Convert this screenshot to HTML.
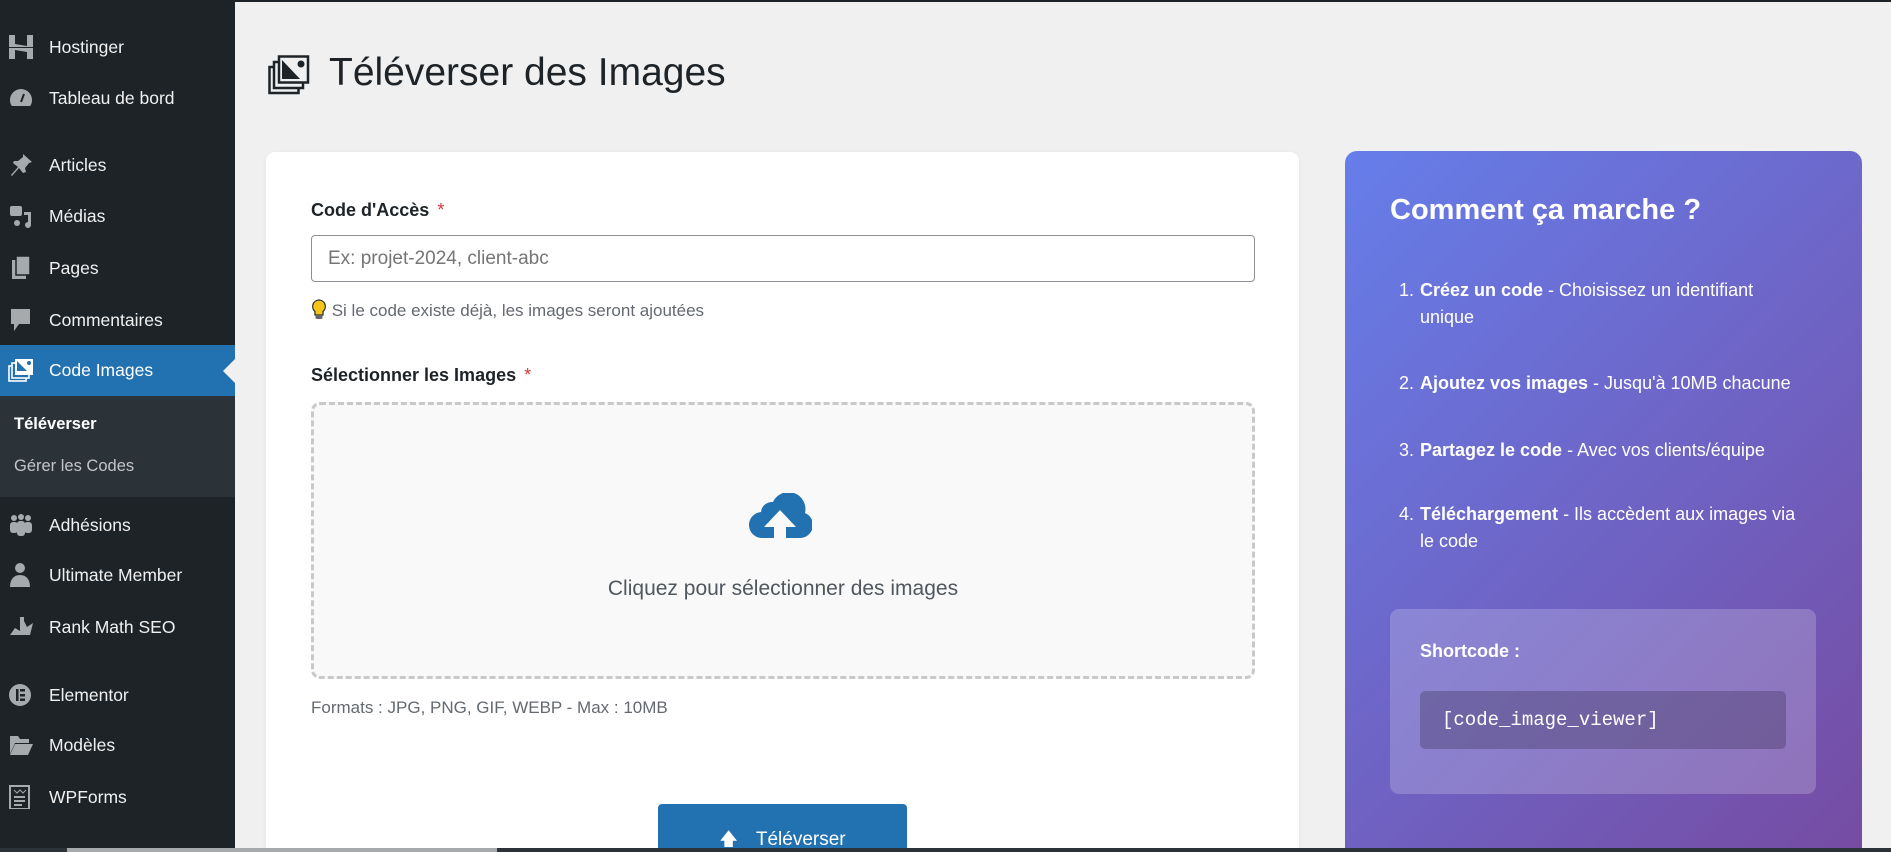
<!DOCTYPE html>
<html style="overflow:hidden;height:852px"><head><meta charset="utf-8">
<style>
*{margin:0;padding:0;box-sizing:border-box}
body{width:1891px;height:852px;overflow:hidden;background:#f0f0f1;font-family:"Liberation Sans",sans-serif;position:relative}
.sb{position:absolute;left:0;top:0;width:235px;height:852px;background:#1d2327}
.it{position:absolute;left:0;width:235px;height:42px;color:#f0f0f1;font-size:17.5px;line-height:42px;padding-left:49px}
.ic{position:absolute;left:8px;top:9px;width:26px;height:24px}
.hl{background:#2271b1;color:#fff}
.sub{position:absolute;left:0;top:396px;width:235px;height:101px;background:#2c3338}
.sub div{position:absolute;left:14px;font-size:16.5px}
.arrow{position:absolute;right:0;top:359px;width:0;height:0;border-top:12px solid transparent;border-bottom:12px solid transparent;border-right:12px solid #f0f0f1}
.card{position:absolute;left:266px;top:152px;width:1033px;height:710px;background:#fff;border-radius:9px;box-shadow:0 1px 4px rgba(0,0,0,.06)}
.lbl{position:absolute;left:311px;font-size:18px;font-weight:bold;color:#1d2327}
.lbl span{color:#d63638;font-weight:normal;margin-left:8px}
.inp{position:absolute;left:311px;top:235px;width:944px;height:47px;border:1px solid #8c8f94;border-radius:4px;font-size:19px;color:#757575;padding-left:16px;line-height:45px}
.drop{position:absolute;left:311px;top:402px;width:944px;height:277px;border:3px dashed #c9c9c9;border-radius:9px;background:#f9f9f9}
.panel{position:absolute;left:1345px;top:151px;width:517px;height:711px;border-radius:12px;background:linear-gradient(135deg,#667eea 0%,#764ba2 100%);color:#fff;overflow:hidden}
.li{position:absolute;left:54px;font-size:18px;line-height:27px;width:403px}
.li .n{position:absolute;left:0}
.li .t{padding-left:21px}
</style></head><body>
<div style="position:absolute;left:0;top:0;width:1891px;height:2px;background:#1d2327"></div>
<div class="sb">
 <div class="it" style="top:26px"><svg class="ic" viewBox="0 0 26 24"><path d="M1 0h6v9l12 2V0h6v12H1zM1 13h24v11h-6v-7L7 15v9H1z" fill="#a7aaad"/></svg>Hostinger</div>
 <div class="it" style="top:77px"><svg class="ic" viewBox="0 0 26 24"><path d="M13 3a11 11 0 0 0-11 11c0 3 1 5 2 6h18c1-1 2-3 2-6A11 11 0 0 0 13 3z" fill="#a7aaad"/><path d="M13 16l3-8" stroke="#1d2327" stroke-width="2"/></svg>Tableau de bord</div>
 <div class="it" style="top:144px"><svg class="ic" viewBox="0 0 26 24"><path d="M15 1l9 8-3 1-4 5 1 4-3 1-4-5-7 8-1-1 7-8-5-4 1-2 4 0 5-4z" fill="#a7aaad"/></svg>Articles</div>
 <div class="it" style="top:195px"><svg class="ic" viewBox="0 0 26 24"><rect x="2" y="2" width="12" height="10" rx="2" fill="#a7aaad"/><circle cx="9" cy="19" r="3" fill="#a7aaad"/><path d="M16 8h7v13a3 3 0 1 1-3-3V11h-4z" fill="#a7aaad"/></svg>Médias</div>
 <div class="it" style="top:247px"><svg class="ic" viewBox="0 0 26 24"><rect x="4" y="4" width="14" height="19" fill="#a7aaad"/><rect x="8" y="0" width="14" height="19" fill="#a7aaad" stroke="#1d2327" stroke-width="1.5"/></svg>Pages</div>
 <div class="it" style="top:299px"><svg class="ic" viewBox="0 0 26 24"><path d="M3 1h19v15H11l-5 7v-7H3z" fill="#a7aaad"/></svg>Commentaires</div>
 <div class="it hl" style="top:345px;height:51px;line-height:51px"><svg class="ic" style="top:13px" viewBox="0 0 26 24"><rect x="1" y="8" width="17" height="15" fill="none" stroke="#fff" stroke-width="1.6"/><rect x="4" y="5" width="17" height="15" fill="#2271b1" stroke="#fff" stroke-width="1.6"/><rect x="7" y="1" width="18" height="16" fill="#fff"/><path d="M9 3l10 10H9z" fill="#2271b1"/><circle cx="21" cy="5" r="2" fill="#2271b1"/></svg>Code Images</div>
 <div class="sub"><div style="top:19px;color:#fff;font-weight:bold">Téléverser</div><div style="top:61px;color:#c3c4c7">Gérer les Codes</div></div>
 <div class="arrow"></div>
 <div class="it" style="top:504px"><svg class="ic" viewBox="0 0 26 24"><circle cx="6" cy="5" r="3" fill="#a7aaad"/><circle cx="13" cy="4" r="3" fill="#a7aaad"/><circle cx="20" cy="5" r="3" fill="#a7aaad"/><rect x="2" y="9" width="8" height="11" rx="3" fill="#a7aaad"/><rect x="16" y="9" width="8" height="11" rx="3" fill="#a7aaad"/><rect x="9" y="8" width="8" height="15" rx="3" fill="#a7aaad"/></svg>Adhésions</div>
 <div class="it" style="top:554px"><svg class="ic" viewBox="0 0 26 24"><circle cx="12" cy="5" r="5" fill="#a7aaad"/><path d="M2 24c0-8 4-12 10-12s10 4 10 12z" fill="#a7aaad"/></svg>Ultimate Member</div>
 <div class="it" style="top:606px"><svg class="ic" viewBox="0 0 26 24"><path d="M2 20l5-7 5 3 4-10 3 6 6-4-3 12z" fill="#a7aaad"/><rect x="12" y="2" width="4" height="16" fill="#a7aaad"/></svg>Rank Math SEO</div>
 <div class="it" style="top:674px"><svg class="ic" viewBox="0 0 26 24"><circle cx="12" cy="12" r="11" fill="#a7aaad"/><rect x="8" y="6" width="2.5" height="12" fill="#1d2327"/><rect x="12" y="6" width="5" height="2.5" fill="#1d2327"/><rect x="12" y="11" width="5" height="2.5" fill="#1d2327"/><rect x="12" y="15.5" width="5" height="2.5" fill="#1d2327"/></svg>Elementor</div>
 <div class="it" style="top:724px"><svg class="ic" viewBox="0 0 26 24"><path d="M2 3h8l2 3h9v4H7l-5 11z" fill="#a7aaad"/><path d="M7 11h18l-5 11H2z" fill="#a7aaad"/></svg>Modèles</div>
 <div class="it" style="top:776px"><svg class="ic" viewBox="0 0 26 24"><rect x="2" y="1" width="19" height="23" fill="none" stroke="#a7aaad" stroke-width="2"/><path d="M6 5l3 3 3-3 3 3 3-3" stroke="#a7aaad" fill="none"/><rect x="6" y="11" width="11" height="2" fill="#a7aaad"/><rect x="6" y="15" width="11" height="2" fill="#a7aaad"/><rect x="6" y="19" width="8" height="2" fill="#a7aaad"/></svg>WPForms</div>
</div>

<svg style="position:absolute;left:268px;top:55px" width="42" height="40" viewBox="0 0 42 40"><rect x="1.5" y="12" width="29" height="26" fill="none" stroke="#1d2327" stroke-width="2.5"/><rect x="6" y="7" width="29" height="26" fill="#f0f0f1" stroke="#1d2327" stroke-width="2.5"/><rect x="11" y="1.5" width="29" height="26" fill="#f0f0f1" stroke="#1d2327" stroke-width="2.5"/><path d="M14 5l18 19H14z" fill="#1d2327"/><circle cx="33" cy="9" r="3.5" fill="#1d2327"/></svg>
<div style="position:absolute;left:329px;top:51px;font-size:39px;color:#1d2327">Téléverser des Images</div>

<div class="card"></div>
<div class="lbl" style="top:200px">Code d'Accès<span>*</span></div>
<div class="inp">Ex: projet-2024, client-abc</div>
<div style="position:absolute;left:311px;top:299px;font-size:17px;color:#646970"><svg width="16" height="22" viewBox="0 0 16 22" style="vertical-align:-5px"><path d="M8 1a6.5 6.5 0 0 0-4 11.5V16h8v-3.5A6.5 6.5 0 0 0 8 1z" fill="#f5c518" stroke="#333" stroke-width="1.3"/><rect x="4.5" y="16" width="7" height="4" rx="1.5" fill="#666"/></svg> Si le code existe déjà, les images seront ajoutées</div>
<div class="lbl" style="top:365px">Sélectionner les Images<span>*</span></div>
<div class="drop"></div>
<svg style="position:absolute;left:749px;top:493px" width="63" height="46" viewBox="0 0 63 46"><path d="M14 45a13 13 0 0 1-2-26 11 11 0 0 1 12-10A17 17 0 0 1 56 20a13 13 0 0 1-5 25z" fill="#2271b1"/><path d="M31 17L15 34h10v12h12V34h10z" fill="#f9f9f9"/></svg>
<div style="position:absolute;left:311px;width:944px;top:577px;text-align:center;font-size:21px;color:#50575e">Cliquez pour sélectionner des images</div>
<div style="position:absolute;left:311px;top:698px;font-size:17px;color:#646970">Formats : JPG, PNG, GIF, WEBP - Max : 10MB</div>
<div style="position:absolute;left:658px;top:804px;width:249px;height:58px;background:#2271b1;border-radius:4px 4px 0 0;color:#fff;font-size:19px;line-height:70px;text-align:center"><span style="font-size:18px;margin-right:18px">&#x1F845;</span>Téléverser</div>

<div class="panel">
 <div style="position:absolute;left:45px;top:43px;font-size:29px;font-weight:bold">Comment ça marche ?</div>
 <div class="li" style="top:126px"><span class="n">1.</span><div class="t"><b>Créez un code</b> - Choisissez un identifiant unique</div></div>
 <div class="li" style="top:219px"><span class="n">2.</span><div class="t"><b>Ajoutez vos images</b> - Jusqu'à 10MB chacune</div></div>
 <div class="li" style="top:286px"><span class="n">3.</span><div class="t"><b>Partagez le code</b> - Avec vos clients/équipe</div></div>
 <div class="li" style="top:350px"><span class="n">4.</span><div class="t"><b>Téléchargement</b> - Ils accèdent aux images via le code</div></div>
 <div style="position:absolute;left:45px;top:458px;width:426px;height:185px;background:rgba(255,255,255,.2);border-radius:9px">
  <div style="position:absolute;left:30px;top:32px;font-size:18px;font-weight:bold">Shortcode :</div>
  <div style="position:absolute;left:30px;top:82px;width:366px;height:58px;background:rgba(60,50,90,.35);border-radius:5px;font-family:'Liberation Mono',monospace;font-size:19px;line-height:58px;padding-left:22px">[code_image_viewer]</div>
 </div>
</div>
<div style="position:absolute;left:0;top:848px;width:1891px;height:4px;background:#2c3338"></div>
<div style="position:absolute;left:67px;top:848px;width:430px;height:4px;background:#a7aaad"></div>
</body></html>
